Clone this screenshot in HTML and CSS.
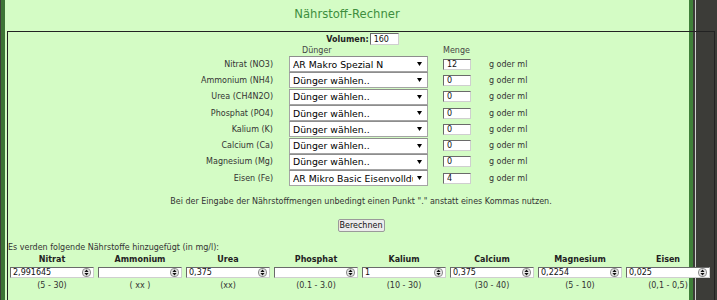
FILE: index.html
```html
<!DOCTYPE html>
<html lang="de">
<head>
<meta charset="utf-8">
<title>Nährstoff-Rechner</title>
<link rel="stylesheet" href="styles.css">
</head>
<body>
<div class="page">
  <h1 class="title">Nährstoff-Rechner</h1>
  <div class="box">
    <div class="vol"><b class="vol-label">Volumen:</b><input class="txt vol-input" value="160"></div>
    <div class="form">
      <span></span><span class="hd hd-duenger">Dünger</span><span class="hd">Menge</span><span></span>

      <span class="lbl">Nitrat (NO3)</span>
      <span class="sel"><select><option>AR Makro Spezial N</option></select><svg class="arr" width="5" height="4" viewBox="0 0 5 4"><path d="M0 0H5L2.5 4Z" fill="#000"/></svg></span>
      <input class="txt amt" value="12"><span class="unit">g oder ml</span>

      <span class="lbl">Ammonium (NH4)</span>
      <span class="sel"><select><option>Dünger wählen..</option></select><svg class="arr" width="5" height="4" viewBox="0 0 5 4"><path d="M0 0H5L2.5 4Z" fill="#000"/></svg></span>
      <input class="txt amt" value="0"><span class="unit">g oder ml</span>

      <span class="lbl">Urea (CH4N2O)</span>
      <span class="sel"><select><option>Dünger wählen..</option></select><svg class="arr" width="5" height="4" viewBox="0 0 5 4"><path d="M0 0H5L2.5 4Z" fill="#000"/></svg></span>
      <input class="txt amt" value="0"><span class="unit">g oder ml</span>

      <span class="lbl">Phosphat (PO4)</span>
      <span class="sel"><select><option>Dünger wählen..</option></select><svg class="arr" width="5" height="4" viewBox="0 0 5 4"><path d="M0 0H5L2.5 4Z" fill="#000"/></svg></span>
      <input class="txt amt" value="0"><span class="unit">g oder ml</span>

      <span class="lbl">Kalium (K)</span>
      <span class="sel"><select><option>Dünger wählen..</option></select><svg class="arr" width="5" height="4" viewBox="0 0 5 4"><path d="M0 0H5L2.5 4Z" fill="#000"/></svg></span>
      <input class="txt amt" value="0"><span class="unit">g oder ml</span>

      <span class="lbl">Calcium (Ca)</span>
      <span class="sel"><select><option>Dünger wählen..</option></select><svg class="arr" width="5" height="4" viewBox="0 0 5 4"><path d="M0 0H5L2.5 4Z" fill="#000"/></svg></span>
      <input class="txt amt" value="0"><span class="unit">g oder ml</span>

      <span class="lbl">Magnesium (Mg)</span>
      <span class="sel"><select><option>Dünger wählen..</option></select><svg class="arr" width="5" height="4" viewBox="0 0 5 4"><path d="M0 0H5L2.5 4Z" fill="#000"/></svg></span>
      <input class="txt amt" value="0"><span class="unit">g oder ml</span>

      <span class="lbl">Eisen (Fe)</span>
      <span class="sel"><select><option>AR Mikro Basic Eisenvolldünger</option></select><svg class="arr" width="5" height="4" viewBox="0 0 5 4"><path d="M0 0H5L2.5 4Z" fill="#000"/></svg></span>
      <input class="txt amt" value="4"><span class="unit">g oder ml</span>
    </div>
    <p class="note">Bei der Eingabe der Nährstoffmengen unbedingt einen Punkt "." anstatt eines Kommas nutzen.</p>
    <div class="btn-row"><button class="btn" type="button">Berechnen</button></div>
    <p class="intro">Es verden folgende Nährstoffe hinzugefügt (in mg/l):</p>
    <div class="results">
      <div class="col"><span class="rh">Nitrat</span><span class="num"><input value="2,991645"><svg class="spin" width="9" height="9" viewBox="0 0 9 9"><rect x="0.5" y="0.5" width="8" height="8" rx="3.5" fill="#e6e6e6" stroke="#8c8c8c"/><path d="M4.5 1.6L6.6 3.9H2.4Z M4.5 7.4L6.6 5.1H2.4Z" fill="#111"/></svg></span><span class="rng">(5 - 30)</span></div>
      <div class="col"><span class="rh">Ammonium</span><span class="num"><input value=""><svg class="spin" width="9" height="9" viewBox="0 0 9 9"><rect x="0.5" y="0.5" width="8" height="8" rx="3.5" fill="#e6e6e6" stroke="#8c8c8c"/><path d="M4.5 1.6L6.6 3.9H2.4Z M4.5 7.4L6.6 5.1H2.4Z" fill="#111"/></svg></span><span class="rng">( xx )</span></div>
      <div class="col"><span class="rh">Urea</span><span class="num"><input value="0,375"><svg class="spin" width="9" height="9" viewBox="0 0 9 9"><rect x="0.5" y="0.5" width="8" height="8" rx="3.5" fill="#e6e6e6" stroke="#8c8c8c"/><path d="M4.5 1.6L6.6 3.9H2.4Z M4.5 7.4L6.6 5.1H2.4Z" fill="#111"/></svg></span><span class="rng">(xx)</span></div>
      <div class="col"><span class="rh">Phosphat</span><span class="num"><input value=""><svg class="spin" width="9" height="9" viewBox="0 0 9 9"><rect x="0.5" y="0.5" width="8" height="8" rx="3.5" fill="#e6e6e6" stroke="#8c8c8c"/><path d="M4.5 1.6L6.6 3.9H2.4Z M4.5 7.4L6.6 5.1H2.4Z" fill="#111"/></svg></span><span class="rng">(0.1 - 3.0)</span></div>
      <div class="col"><span class="rh">Kalium</span><span class="num"><input value="1"><svg class="spin" width="9" height="9" viewBox="0 0 9 9"><rect x="0.5" y="0.5" width="8" height="8" rx="3.5" fill="#e6e6e6" stroke="#8c8c8c"/><path d="M4.5 1.6L6.6 3.9H2.4Z M4.5 7.4L6.6 5.1H2.4Z" fill="#111"/></svg></span><span class="rng">(10 - 30)</span></div>
      <div class="col"><span class="rh">Calcium</span><span class="num"><input value="0,375"><svg class="spin" width="9" height="9" viewBox="0 0 9 9"><rect x="0.5" y="0.5" width="8" height="8" rx="3.5" fill="#e6e6e6" stroke="#8c8c8c"/><path d="M4.5 1.6L6.6 3.9H2.4Z M4.5 7.4L6.6 5.1H2.4Z" fill="#111"/></svg></span><span class="rng">(30 - 40)</span></div>
      <div class="col"><span class="rh">Magnesium</span><span class="num"><input value="0,2254"><svg class="spin" width="9" height="9" viewBox="0 0 9 9"><rect x="0.5" y="0.5" width="8" height="8" rx="3.5" fill="#e6e6e6" stroke="#8c8c8c"/><path d="M4.5 1.6L6.6 3.9H2.4Z M4.5 7.4L6.6 5.1H2.4Z" fill="#111"/></svg></span><span class="rng">(5 - 10)</span></div>
      <div class="col"><span class="rh">Eisen</span><span class="num"><input value="0,025"><svg class="spin" width="9" height="9" viewBox="0 0 9 9"><rect x="0.5" y="0.5" width="8" height="8" rx="3.5" fill="#e6e6e6" stroke="#8c8c8c"/><path d="M4.5 1.6L6.6 3.9H2.4Z M4.5 7.4L6.6 5.1H2.4Z" fill="#111"/></svg></span><span class="rng">(0,1 - 0,5)</span></div>
    </div>
  </div>
</div>
</body>
</html>
```
FILE: styles.css
```css
html, body {
  margin: 0;
  padding: 0;
  height: 100%;
  overflow: hidden;
}
body {
  background: #3c3c38;
  font-family: "DejaVu Sans", Verdana, sans-serif;
  font-size: 8px;
  color: #333;
}
.page {
  margin-left: 1px;
  width: 684px;
  min-height: 320px;
  background: #d4fcc5;
  border-left: 4px solid #3d7436;
  border-right: 4px solid #3f7f39;
  box-shadow: 2px 0 0 #3c3c38, 3px 0 0 #d0d0d0;
}
.title {
  margin: 0 0 3px;
  height: 28px;
  line-height: 28px;
  text-align: center;
  font-size: 11.6px;
  font-weight: normal;
  color: #3e8e3e;
}
.box {
  margin-left: 2px;
  width: 706px;
  border: 1px solid #222;
  min-height: 300px;
}
.vol {
  display: flex;
  justify-content: center;
  align-items: center;
  gap: 1px;
  height: 12px;
  margin-top: 1px;
  padding-left: 3px;
}
.vol-label {
  font-weight: bold;
  color: #222;
}
.txt {
  box-sizing: border-box;
  border: 1px solid;
  border-color: #6a6a6a #cfcfcf #cfcfcf #6a6a6a;
  background: #fff;
  font-family: "DejaVu Sans", Verdana, sans-serif;
  font-size: 8px;
  color: #111;
  padding: 0 3px;
  margin: 0;
  outline: none;
}
.vol-input {
  width: 29px;
  height: 12px;
}
.form {
  display: grid;
  grid-template-columns: 77px 139px 28px 38px;
  grid-template-rows: 10px;
  grid-auto-rows: 16.3px;
  column-gap: 16px;
  justify-content: center;
  align-items: center;
  margin-top: 1px;
}
.form > :nth-child(4n+3) {
  margin-left: -1px;
}
.hd {
  color: #444;
  line-height: 10px;
  align-self: end;
}
.hd-duenger {
  padding-left: 13px;
}
.lbl {
  text-align: right;
  white-space: nowrap;
  color: #333;
}
.sel {
  position: relative;
  display: block;
  height: 16px;
}
.sel select {
  -webkit-appearance: none;
  appearance: none;
  box-sizing: border-box;
  width: 139px;
  height: 16px;
  margin: 0;
  border: 1px solid #a4a4a4;
  border-top-color: #8d8d8d;
  border-radius: 0;
  background: #fff;
  font-family: "DejaVu Sans", Verdana, sans-serif;
  font-size: 9.3px;
  color: #000;
  padding: 0 14px 0 3px;
  outline: none;
}
.arr {
  position: absolute;
  right: 6px;
  top: 6px;
}
.amt {
  width: 28px;
  height: 11px;
}
.unit {
  white-space: nowrap;
  color: #333;
  margin-left: 1px;
}
.note {
  margin: 11px 0 0;
  line-height: 10px;
  text-align: center;
  color: #333;
}
.btn-row {
  display: flex;
  justify-content: center;
  margin-top: 12px;
}
.btn {
  box-sizing: border-box;
  width: 47px;
  height: 13px;
  margin: 0;
  padding: 0;
  font-family: "DejaVu Sans", Verdana, sans-serif;
  font-size: 8px;
  color: #111;
  background: #ececec;
  border: 1px solid #9a9a9a;
  border-radius: 2px;
}
.intro {
  margin: 11px 0 0;
  line-height: 10px;
  color: #333;
}
.results {
  display: grid;
  grid-template-columns: repeat(8, 88px);
  margin-top: 2px;
}
.col {
  display: flex;
  flex-direction: column;
}
.rh {
  text-align: center;
  font-weight: bold;
  color: #222;
  line-height: 10px;
}
.num {
  box-sizing: border-box;
  display: flex;
  align-items: center;
  width: 84px;
  height: 11px;
  margin: 2px 0 0 2px;
  background: #fff;
  border: 1px solid;
  border-color: #6a6a6a #cfcfcf #cfcfcf #6a6a6a;
}
.num input {
  flex: 1;
  min-width: 0;
  border: 0;
  padding: 0 0 0 2px;
  margin: 0;
  height: 9px;
  background: transparent;
  font-family: "DejaVu Sans", Verdana, sans-serif;
  font-size: 8px;
  color: #111;
  outline: none;
}
.spin {
  flex: none;
  margin-right: 2px;
}
.rng {
  text-align: center;
  line-height: 10px;
  margin-top: 3px;
  color: #333;
}
```
